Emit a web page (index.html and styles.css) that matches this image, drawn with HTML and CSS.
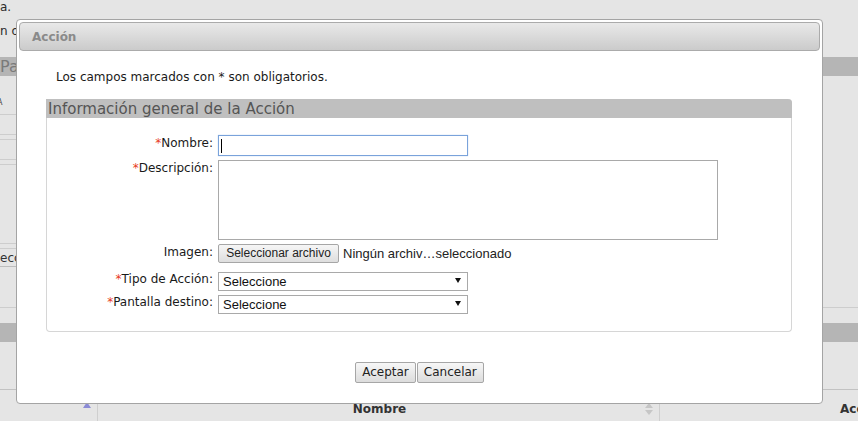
FILE: index.html
```html
<!DOCTYPE html>
<html lang="es">
<head>
<meta charset="utf-8">
<title>Acción</title>
<link rel="stylesheet" href="styles.css">
</head>
<body>
<div class="page">
  <p class="bg-line first">a.</p>
  <p class="bg-line second">n o</p>
  <div class="bg-bar">Pa</div>
  <div class="bg-left">
    <div class="bl r1"><span class="tiny">A</span></div>
    <div class="bl r2"></div>
    <div class="bl r3"></div>
    <div class="bl r4"></div>
    <div class="bl r5"></div>
    <div class="bl r6"></div>
    <div class="bl r7"></div>
    <div class="bl r8"><span class="bg-btn">ecc</span></div>
    <div class="bl r9"></div>
  </div>
  <div class="bg-rule"></div>
  <div class="bg-bar2"></div>
  <div class="bg-gap"></div>
  <div class="bg-head">
    <div class="hc c1"><span class="sort-up"></span></div>
    <div class="hc c2"><span></span><span class="hname">Nombre</span><svg class="sort-both" width="8" height="12" viewBox="0 0 8 12"><polygon points="4,0 8,5 0,5" fill="#c6c6c6"/><polygon points="0,7 8,7 4,12" fill="#c6c6c6"/></svg></div>
    <div class="hc c3">Acciones</div>
  </div>
</div>

<div class="dialog">
  <div class="dlg-title">Acción</div>
  <p class="note">Los campos marcados con * son obligatorios.</p>
  <div class="group">
    <div class="group-title">Información general de la Acción</div>
    <div class="form">
      <label class="lbl"><span class="req">*</span>Nombre:</label>
      <div class="ctl caret-wrap"><input class="txt focus" type="text"><span class="caret"></span></div>

      <label class="lbl"><span class="req">*</span>Descripción:</label>
      <div class="ctl"><textarea class="area"></textarea></div>

      <label class="lbl">Imagen:</label>
      <div class="ctl file-row"><button class="file-btn" type="button">Seleccionar archivo</button><span class="file-name">Ningún archiv…seleccionado</span></div>

      <label class="lbl tight"><span class="req">*</span>Tipo de Acción:</label>
      <div class="ctl sel-wrap"><select class="sel"><option>Seleccione</option></select></div>

      <label class="lbl tight"><span class="req">*</span>Pantalla destino:</label>
      <div class="ctl sel-wrap"><select class="sel"><option>Seleccione</option></select></div>
    </div>
  </div>
  <div class="actions">
    <button class="btn" type="button">Aceptar</button>
    <button class="btn" type="button">Cancelar</button>
  </div>
</div>
</body>
</html>
```
FILE: styles.css
```css
* { box-sizing: border-box; }
html, body { margin: 0; padding: 0; }
body {
  width: 858px;
  height: 421px;
  overflow: hidden;
  position: relative;
  background: #e5e5e5;
  font-family: "DejaVu Sans", Verdana, sans-serif;
  font-size: 12px;
  color: #222;
}

/* ---------- dimmed background page ---------- */
.page { width: 858px; }
.bg-line { margin: 0; line-height: 14px; color: #2a2a2a; }
.bg-line.first { height: 24px; }
.bg-line.second { height: 33px; }
.bg-bar {
  height: 19px;
  background: #b5b5b5;
  color: #7a7a7a;
  font-size: 16px;
  line-height: 19px;
}
.bg-left { width: 300px; }
.bl { border-top: 1px solid #cdcdcd; }
.r1 { height: 38px; border-top: 0; display: flex; align-items: flex-end; padding-bottom: 6px; }
.tiny { font-size: 8px; line-height: 10px; margin-left: -3px; color: #444; }
.r2 { height: 20px; }
.r3 { height: 5px; }
.r4 { height: 20px; }
.r5 { height: 5px; }
.r6 { height: 79px; }
.r7 { height: 5px; }
.r8 { height: 19px; padding-top: 2px; border-bottom: 1px solid #bdbdbd; }
.bg-btn { line-height: 14px; color: #333; }
.r9 { height: 40px; border-top: 0; }
.bg-rule { height: 16px; border-top: 1px solid #cdcdcd; }
.bg-bar2 { height: 19px; background: #b5b5b5; }
.bg-gap { height: 47px; }
.bg-head {
  height: 32px;
  border-top: 1px solid #c2c2c2;
  display: flex;
}
.hc { height: 31px; }
.c1 {
  width: 98px;
  border-right: 1px solid #cfcfcf;
  display: flex;
  justify-content: flex-end;
  align-items: flex-start;
  padding: 12px 6px 0 0;
}
.sort-up {
  width: 0; height: 0;
  border-left: 4px solid transparent;
  border-right: 4px solid transparent;
  border-bottom: 6px solid #8b8bd6;
}
.c2 {
  width: 562px;
  border-right: 1px solid #cfcfcf;
  display: grid;
  grid-template-columns: 1fr auto 1fr;
  align-items: start;
  padding: 12px 0 0 2px;
}
.hname { font-weight: bold; color: #333; line-height: 14px; }
.sort-both { justify-self: end; margin: 1px 6px 0 0; }
.c3 {
  flex: 1;
  padding: 12px 0 0 180px;
  font-weight: bold;
  color: #333;
  line-height: 14px;
  white-space: nowrap;
  overflow: hidden;
}

/* ---------- dialog ---------- */
.dialog {
  position: absolute;
  left: 16px;
  top: 19px;
  width: 807px;
  height: 385px;
  border: 1px solid #a4a4a4;
  border-radius: 4px;
  background: #fff;
  padding: 2px;
}
.dlg-title {
  height: 29px;
  border: 1px solid #ababab;
  border-radius: 4px;
  background: linear-gradient(#e9e9e9, #cbcbcb);
  padding-left: 12px;
  line-height: 28px;
  font-weight: bold;
  color: #8a8a8a;
}
.note {
  margin: 19px 0 0 37px;
  line-height: 14px;
  color: #1a1a1a;
}
.group {
  margin: 15px 0 0 27px;
  width: 746px;
  border: 1px solid #d6d6d6;
  border-top: 0;
  border-radius: 0 4px 4px 4px;
}
.group-title {
  margin: 0 -1px;
  height: 19px;
  background: #bfbfbf;
  border-radius: 0 4px 0 0;
  padding: 1px 0 0 2px;
  font-size: 15px;
  line-height: 18px;
  color: #555;
}
.form {
  display: grid;
  grid-template-columns: 166px 1fr;
  grid-template-rows: 21px 80px 24px 19px 19px;
  column-gap: 5px;
  row-gap: 4px;
  padding: 17px 0 17px 0;
}
.lbl {
  text-align: right;
  line-height: 14px;
  padding-top: 1px;
  color: #1a1a1a;
  white-space: nowrap;
}
.lbl.tight { padding-top: 0; }
.req { color: #e8391e; }
.ctl { display: flex; align-items: flex-start; }
.caret-wrap { position: relative; }
.txt {
  width: 250px;
  height: 21px;
  margin: 0;
  border: 1px solid #7aa3db;
  box-shadow: 0 0 1px #a9c6ee;
  outline: none;
  padding: 0 3px;
  font-family: "Liberation Sans", Arial, sans-serif;
  font-size: 13px;
  background: #fff;
}
.caret {
  position: absolute;
  left: 3px;
  top: 4px;
  width: 1px;
  height: 14px;
  background: #000;
}
.area {
  width: 500px;
  height: 80px;
  margin: 0;
  border: 1px solid #a9a9a9;
  resize: none;
  outline: none;
  padding: 2px;
  font-family: "Liberation Sans", Arial, sans-serif;
  font-size: 13px;
}
.file-row { align-items: flex-start; }
.file-btn {
  width: 121px;
  height: 19px;
  margin: 0;
  padding: 0;
  border: 1px solid #a6a6a6;
  border-radius: 2px;
  background: linear-gradient(#f6f6f6, #dedede);
  font-family: "Liberation Sans", Arial, sans-serif;
  font-size: 12px;
  line-height: 17px;
  color: #222;
}
.file-name {
  margin-left: 4px;
  font-family: "Liberation Sans", Arial, sans-serif;
  font-size: 13px;
  line-height: 19px;
  color: #222;
  white-space: nowrap;
}
.sel-wrap { position: relative; width: 250px; }
.sel-wrap::after {
  content: "";
  position: absolute;
  right: 7px;
  top: 6px;
  width: 0; height: 0;
  border-left: 3px solid transparent;
  border-right: 3px solid transparent;
  border-top: 5px solid #111;
}
.sel {
  -webkit-appearance: none;
  appearance: none;
  width: 250px;
  height: 19px;
  margin: 0;
  border: 1px solid #a9a9a9;
  border-radius: 0;
  background: #fff;
  padding: 0 0 0 4px;
  font-family: "Liberation Sans", Arial, sans-serif;
  font-size: 13px;
  line-height: 17px;
  color: #111;
  outline: none;
}
.actions {
  margin-top: 30px;
  display: flex;
  justify-content: center;
  gap: 1px;
}
.btn {
  height: 21px;
  margin: 0;
  padding: 0 6px;
  border: 1px solid #a6a6a6;
  border-radius: 2px;
  background: linear-gradient(#f7f7f7, #dcdcdc);
  font-family: "DejaVu Sans", Verdana, sans-serif;
  font-size: 12px;
  line-height: 19px;
  color: #222;
}
```
